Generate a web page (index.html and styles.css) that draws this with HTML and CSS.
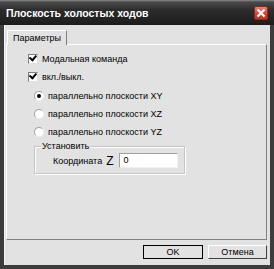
FILE: index.html
```html
<!doctype html>
<html>
<head>
<meta charset=utf-8>
<title>Плоскость холостых ходов</title>
<link rel="stylesheet" href="styles.css">
</head>
<body>

<div class=window>
  <div class=titlebar>
    <span class=title>Плоскость холостых ходов</span>
    <span class=close>
      <svg width=10 height=10 viewBox="0 0 10 10"><path d="M1.5 1.5 L8.5 8.5 M8.5 1.5 L1.5 8.5" stroke="#fff" stroke-width="2.2"/></svg>
    </span>
  </div>

  <div class=client>
    <div class=tabs>
      <div class="tab active">Параметры</div>
    </div>
    <div class=panel>
      <label class=row><span class="check on"></span>Модальная команда</label>
      <label class=row><span class="check on"></span>вкл./выкл.</label>
      <div class=radios>
        <label class=row><span class="radio on"></span>параллельно плоскости XY</label>
        <label class=row><span class=radio></span>параллельно плоскости XZ</label>
        <label class=row><span class=radio></span>параллельно плоскости YZ</label>
      </div>
      <div class=group>
        <span class=legend>Установить</span>
        <div class=coord>
          <span>Координата</span><span class=axis>Z</span>
          <span class=input>0</span>
        </div>
      </div>
    </div>
    <div class=buttons>
      <button class="btn default">OK</button>
      <button class=btn>Отмена</button>
    </div>
  </div>
</div>

</body>
</html>
```

FILE: styles.css
```css
body {
  margin: 0;
  font-family: "Liberation Sans", Arial, sans-serif;
  font-size: 9px;
  color: #000;
}

.window {
  width: 274px;
  height: 269px;
  box-sizing: border-box;
  background: #3c3c3c;
  padding: 0 4px 4px 4px;
  display: flex;
  flex-direction: column;
}

.titlebar {
  height: 25px;
  margin: 0 -4px;
  padding: 0 6px;
  display: flex;
  align-items: center;
  justify-content: space-between;
  background: linear-gradient(#8a8a8a 0, #4a4a4a 2px, #2c2c2c 10px, #1c1c1c 25px);
}
.title {
  color: #fff;
  font-weight: bold;
  font-size: 10.5px;
}
.close {
  width: 14px;
  height: 14px;
  box-sizing: border-box;
  border: 1px solid #8a2a1a;
  border-radius: 2px;
  background: linear-gradient(#f08070, #d04030 60%, #c03525);
  display: flex;
  align-items: center;
  justify-content: center;
}

.client {
  flex: 1;
  background: #e2e2e2;
  border-left: 1px solid #f4f4f4;
  display: flex;
  flex-direction: column;
  padding: 5px 3px 0 1px;
}

.tabs {
  display: flex;
  padding-left: 1px;
  height: 14px;
}
.tab {
  width: 60px;
  padding: 2px 0 0 5px;
  background: #e2e2e2;
  border: 1px solid #fff;
  border-right-color: #808080;
  border-bottom: none;
  position: relative;
  z-index: 1;
  height: 15px;
  box-sizing: border-box;
}

.panel {
  height: 196px;
  box-sizing: border-box;
  border: 1px solid #fff;
  border-right-color: #808080;
  border-bottom-color: #808080;
  padding: 8px 0 0 21px;
  display: flex;
  flex-direction: column;
  gap: 6px;
}

.row {
  display: flex;
  align-items: center;
  gap: 4px;
  height: 12px;
}

.check {
  width: 10px;
  height: 10px;
  box-sizing: border-box;
  background: #fff;
  border: 1px solid #808080;
  border-right-color: #e0e0e0;
  border-bottom-color: #e0e0e0;
  position: relative;
}
.check.on::after {
  content: "";
  position: absolute;
  left: 1px;
  top: 0;
  width: 5px;
  height: 3px;
  border-left: 2px solid #000;
  border-bottom: 2px solid #000;
  transform: rotate(-50deg);
  transform-origin: 3px 3px;
}

.radios {
  display: flex;
  flex-direction: column;
  gap: 6px;
  padding-left: 6px;
  margin-top: 1px;
}
.radio {
  width: 10px;
  height: 10px;
  box-sizing: border-box;
  border-radius: 50%;
  background: #fff;
  border: 1px solid #a0a0a0;
  border-right-color: #f0f0f0;
  border-bottom-color: #f0f0f0;
  position: relative;
}
.radio.on::after {
  content: "";
  position: absolute;
  left: 2px;
  top: 2px;
  width: 4px;
  height: 4px;
  border-radius: 50%;
  background: #000;
}

.group {
  margin: 2px 0 0 6px;
  width: 151px;
  height: 28px;
  box-sizing: border-box;
  padding: 6px 0 0 18px;
  border: 1px solid #c4c4c4;
  box-shadow: inset 1px 1px #fff, 1px 1px #fff;
  position: relative;
}
.legend {
  position: absolute;
  left: 6px;
  top: -6px;
  padding: 0 1px;
  background: #e2e2e2;
}
.coord {
  display: flex;
  align-items: center;
}
.axis {
  font-size: 12px;
  margin: 0 6px 0 4px;
}
.input {
  width: 59px;
  height: 15px;
  box-sizing: border-box;
  background: #fff;
  border: 1px solid #a0a0a0;
  border-right-color: #f0f0f0;
  border-bottom-color: #f0f0f0;
  padding: 1px 0 0 3px;
}

.buttons {
  display: flex;
  justify-content: flex-end;
  gap: 5px;
  padding: 5px 0 0 0;
}
.btn {
  font: inherit;
  width: 59px;
  height: 14px;
  padding: 0;
  background: #e2e2e2;
  border: 1px solid #fff;
  border-right-color: #404040;
  border-bottom-color: #404040;
}
.btn.default {
  outline: 1px solid #000;
  outline-offset: -1px;
  width: 60px;
}
```
